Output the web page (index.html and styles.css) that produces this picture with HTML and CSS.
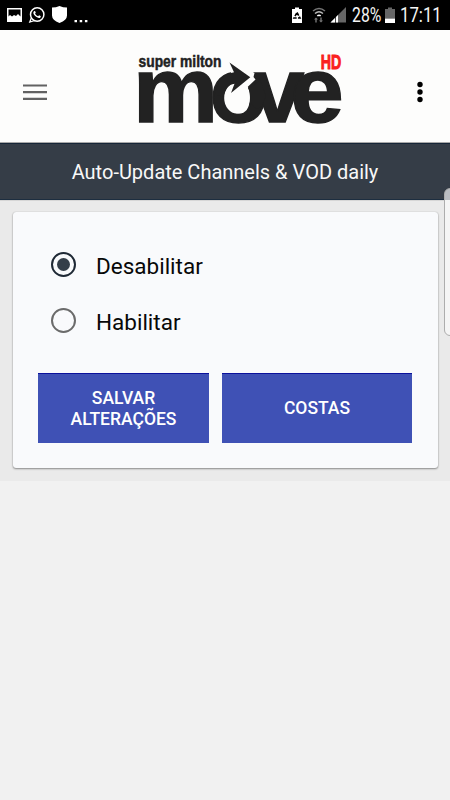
FILE: index.html
```html
<!DOCTYPE html>
<html lang="pt">
<head>
<meta charset="utf-8">
<meta name="viewport" content="width=device-width">
<title>Auto-Update Channels &amp; VOD daily</title>
<link rel="stylesheet" href="styles.css">
</head>
<body>
<div class="status">
  <svg class="status-left" width="100" height="30" viewBox="0 0 100 30">
    <path fill="#fff" fill-rule="evenodd" d="M7 8h15v14H7zM8.500 9.500v7l1.500-1.500 2 1.500 2-1.500 2 1 2-2 2.500 2.500v-7z"/>
    <circle cx="37.2" cy="14.5" r="6.700" fill="none" stroke="#fff" stroke-width="1.5"/>
    <path d="M31.500 17.500 29.800 22l5-1.500" fill="none" stroke="#fff" stroke-width="1.300"/>
    <path d="M34 11.200c.8-.8 1.500 0 1.800 1.400l-.7.9c.7 1.500 1.500 2.200 3 2.800l1-1c1.800.7 2.100 1.100 1.300 2.100-1 1.200-3.500.4-5.200-1.300-1.800-1.700-2.500-3.700-1.200-4.900z" fill="#fff"/>
    <path d="M52 7.500q4 0 7.500-1.500 3.500 1.500 7.500 1.500v8q0 4.500-7.500 7.500-7.500-3-7.500-7.500z" fill="#fff"/>
    <path d="M74.500 20h2.500v2.300h-2.500zM79.700 20h2.500v2.300h-2.500zM84.900 20h2.500v2.300h-2.500z" fill="#fff"/>
  </svg>
  <div class="status-right">
    <svg width="59" height="30" viewBox="0 0 59 30">
      <path fill="#fff" d="M3 9h3V7.500h4V9h3v14H3z"/>
      <path fill="none" stroke="#000" stroke-width="1.600" stroke-dasharray="3.500 1.300" d="M8 12.500 11 18H5z"/>
      <g fill="none" stroke="#777" stroke-width="1.500"><path d="M24 11q6-5 12 0"/><path d="M26 13.500q4-3.500 8 0" stroke="#bbb"/><path d="M28.300 15.800q1.700-1.300 3.400 0" stroke="#fff"/></g>
      <path fill="#777" d="M27 17.500l2 2h-1.300v3h-1.400v-3H25zM32 22.500l-2-2h1.300v-3h1.400v3H34z"/>
      <path fill="#666" d="M57 22.500V7L41.500 22.500z"/>
      <path fill="#fff" d="M49 22.500V15l-7.500 7.500z"/>
      <path d="M46.500 15v8" stroke="#000" stroke-width=".7"/>
    </svg>
    <span class="percent">28%</span>
    <svg width="12" height="30" viewBox="0 0 12 30"><path fill="#666" d="M1 9h3V7.500h4V9h3v9.500H1z"/><path fill="#fff" d="M1 18.500h10V23H1z"/></svg>
    <span class="clock">17:11</span>
  </div>
</div>
<header class="header">
  <svg class="menu" width="24" height="20" viewBox="0 0 24 20"><path d="M0 3.500h24M0 10.200h24M0 16.800h24" stroke="#626262" stroke-width="2.200"/></svg>
  <svg class="logo" width="220" height="90" viewBox="130 45 220 90">
    <g transform="translate(133 122.300) scale(1.040 1)"><text class="word" x="0 73.500 113.500 151.500" y="0">move</text></g>
    <ellipse cx="237" cy="98" rx="12.800" ry="15.500" fill="#fdfdfc"/>
    <path d="M250 92C249 104 256 114 262 105L266 96 259 77Q259 85 248 88z" fill="#222"/>
    <path d="M233 59 252 71.500 254.500 73 253.500 77 255.500 79.500 247 87.500 240 91 231 94 230 80z" fill="#fdfdfc"/>
    <path d="M229.500 62.500 250.300 77.300 231 93l3.500-9.200c-6 .5-10 6-10.800 13l-8.700-2q3-20 19-22.500z" fill="#222"/>
    <text class="brand" x="138.500" y="66.500" textLength="83" lengthAdjust="spacingAndGlyphs">super milton</text>
    <text class="hd" x="320.800" y="69" textLength="20.500" lengthAdjust="spacingAndGlyphs">HD</text>
  </svg>
  <svg class="more" width="8" height="22" viewBox="0 0 8 22"><circle cx="4" cy="3.500" r="2.700"/><circle cx="4" cy="11" r="2.700"/><circle cx="4" cy="18.500" r="2.700"/></svg>
</header>
<h1 class="title">Auto-Update Channels &amp; VOD daily</h1>
<main class="panel">
  <section class="card">
    <div class="option"><span class="radio selected"></span><span class="label">Desabilitar</span></div>
    <div class="option"><span class="radio"></span><span class="label">Habilitar</span></div>
    <div class="buttons">
      <button>SALVAR<br>ALTERAÇÕES</button>
      <button>COSTAS</button>
    </div>
  </section>
</main>
<div class="edge-handle"></div>
</body>
</html>
```
FILE: styles.css
```css
* { box-sizing: border-box; }
body { margin: 0; height: 800px; overflow: hidden; position: relative; background: #f1f1f1; font-family: Roboto, sans-serif; }
svg { display: block; flex: none; }
.status { height: 30px; background: #000; color: #f5f5f5; display: flex; justify-content: space-between; }
.status-right { display: flex; align-items: center; width: 161px; font-size: 19.500px; line-height: 30px; }
.percent, .clock { flex: none; transform-origin: left center; white-space: nowrap; padding-top: 2px; }
.percent { width: 36px; transform: translateX(4px) scaleX(.81); }
.clock { transform: translateX(4px) scaleX(.86); }
.header { height: 113px; background: #fdfdfc; border-bottom: 1px solid #a9a9a9; display: flex; align-items: center; padding: 0 26px 0 23px; }
.menu { margin-top: 12px; }
.logo { margin-left: 83px; margin-top: 8px; overflow: visible; }
.more { margin-left: auto; margin-top: 12px; fill: #000; }
.word { font: bold 92px "Liberation Sans", sans-serif; fill: #222; stroke: #222; stroke-width: 1.4px; }
.brand { font: bold 17px "Liberation Sans", sans-serif; fill: #222; stroke: #222; stroke-width: .5px; }
.hd { font: bold 20px "Liberation Sans", sans-serif; fill: #fa2020; stroke: #fa2020; stroke-width: .9px; }
.title { margin: 0; height: 57px; border-top: 1px solid #172638; border-bottom: 1px solid #1d2e40; background: #353d47; color: #f8f8f8; font-size: 20px; font-weight: 400; line-height: 56px; text-align: center; }
.panel { height: 281px; background: #eaeaea; padding: 11px 12px; border-top: 1px solid #d6d6d6; }
.card { height: 256px; margin: 0 0 0 1px; background: #f9fafc; border-radius: 3px; padding: 25px 25px 0; box-shadow: 0 1px 2px rgba(0,0,0,.4), 0 0 1px rgba(0,0,0,.25); }
.option { height: 55.500px; display: flex; align-items: center; padding-left: 13px; }
.radio { width: 25px; height: 25px; border: 2.500px solid #6b6b6b; border-radius: 50%; display: flex; align-items: center; justify-content: center; }
.selected { border-color: #1f2935; }
.selected::after { content: ""; width: 13px; height: 13px; border-radius: 50%; background: #343e49; }
.label { margin-left: 20px; font-size: 22.500px; line-height: 30px; color: #080808; padding-top: 3px; }
.buttons { margin-top: 25px; display: grid; grid-template-columns: 171px 190px; gap: 13px; height: 70px; }
button { border: 0; border-top: 1px solid #0b119c; background: #3f51b5; color: #fff; font: 500 17.500px/21px Roboto, sans-serif; padding: 0; }
.edge-handle { position: absolute; top: 188px; right: -7px; width: 13px; height: 148px; border: 1px solid #adadad; border-radius: 6px; background: linear-gradient(#babdc2 11px, #f5f5f5 11px); }
```
